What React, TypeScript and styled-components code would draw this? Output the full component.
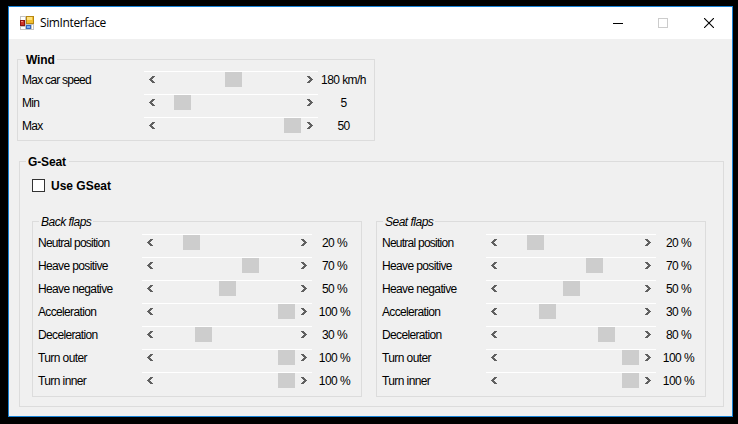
import React from "react";
import styled, { createGlobalStyle } from "styled-components";

const GlobalStyle = createGlobalStyle`
  * { box-sizing: border-box; }
  html, body { margin: 0; background: #000; }
  body { overflow: hidden; }
`;

const Desktop = styled.main`
  width: 738px;
  height: 424px;
  padding: 6px 5px 7px 8px;
  background: #000;
  color: #000;
  font: 12px/14px "Liberation Sans", Arial, sans-serif;
`;

const Window = styled.section`
  display: flex;
  flex-direction: column;
  width: 725px;
  height: 411px;
  border: 1px solid #1883d7;
  background: #f0f0f0;
`;

const TitleBar = styled.header`
  display: flex;
  align-items: center;
  flex: 0 0 32px;
  padding-left: 11px;
  background: #fff;
`;

const Title = styled.h1`
  flex: 1;
  margin: 0 0 0 6px;
  font: 400 12px/16px "Open Sans", "Noto Sans", sans-serif;
  letter-spacing: -0.38px;
`;

const Caption = styled.div`
  display: grid;
  grid-template-columns: 45px 46px 11px;
  align-items: center;
  padding-right: 17px;
`;

const Client = styled.div`
  display: flex;
  flex-direction: column;
  align-items: flex-start;
  gap: 20px;
  padding: 20px 0 0 8px;
`;

const Group = styled.section<{ $w: number; $h: number; $indent?: number }>`
  width: ${(p) => p.$w}px;
  height: ${(p) => p.$h}px;
  margin-left: ${(p) => p.$indent ?? 0}px;
  border: 1px solid #dcdcdc;
`;

const Legend = styled.h2<{ $w: number; $italic?: boolean; $spacing: number }>`
  width: ${(p) => p.$w}px;
  height: 14px;
  margin: -7px 0 0 6px;
  padding-left: 2px;
  background: #f0f0f0;
  font-size: 12px;
  line-height: 14px;
  font-weight: ${(p) => (p.$italic ? 400 : 700)};
  font-style: ${(p) => (p.$italic ? "italic" : "normal")};
  letter-spacing: ${(p) => p.$spacing}px;
  white-space: nowrap;
`;

const Rows = styled.div<{ $top: number; $left: number }>`
  padding: ${(p) => p.$top}px 0 0 ${(p) => p.$left}px;
`;

const Row = styled.div`
  display: flex;
  height: 23px;
`;

const Label = styled.span<{ $w: number; $spacing: number }>`
  flex: 0 0 ${(p) => p.$w}px;
  padding-top: 2px;
  letter-spacing: ${(p) => p.$spacing}px;
  white-space: nowrap;
`;

const ScrollBar = styled.div<{ $w: number }>`
  display: flex;
  flex: 0 0 ${(p) => p.$w}px;
  height: 17px;
  padding: 0 5px;
  border-top: 1px solid #fff;
`;

const Track = styled.div`
  flex: 1;
`;

const Thumb = styled.div<{ $offset: number }>`
  width: 17px;
  height: 15px;
  margin-left: ${(p) => p.$offset}px;
  background: #cdcdcd;
`;

const Value = styled.span<{ $w: number }>`
  flex: 0 0 ${(p) => p.$w}px;
  padding-top: 2px;
  letter-spacing: -0.55px;
  text-align: center;
  white-space: nowrap;
`;

const ArrowSvg = styled.svg<{ $flip?: boolean }>`
  flex: none;
  margin-top: 4px;
  transform: ${(p) => (p.$flip ? "scaleX(-1)" : "none")};
`;

const CheckLine = styled.label`
  display: flex;
  align-items: flex-start;
  gap: 6px;
  margin: 10px 0 0 12px;
  height: 14px;
  font-weight: 700;
`;

const CheckBox = styled.span`
  width: 13px;
  height: 13px;
  border: 1px solid #333;
  background: #fff;
`;

const FlapGroups = styled.div`
  display: flex;
  gap: 14px;
  margin: 28px 0 0 12px;
`;

const Arrow = ({ flip }: { flip?: boolean }) => (
  <ArrowSvg $flip={flip} width="6" height="7" viewBox="0 0 6 7" shapeRendering="crispEdges">
    <path
      d="M3 0h3v1h-1v1h-1v1h-1v1h1v1h1v1h1v1h-3v-1h-1v-1h-1v-1h-1v-1h1v-1h1v-1h1z"
      fill="#606060"
    />
  </ArrowSvg>
);

const AppIcon = () => (
  <svg width="14" height="14" viewBox="0 0 14 14" shapeRendering="crispEdges">
    <path d="M0 0h14v14H0z" fill="#c3c3c3" />
    <path d="M1 1h4v3H1zM1 11h4v2H1zM12 9h1v4h-1z" fill="#fff" />
    <path d="M0 4h5v6H0z" fill="#8e1512" />
    <path d="M1 5h3v4H1z" fill="#cf3529" />
    <path d="M1 5h2v1H1z" fill="#ef8c78" />
    <path d="M6 0h8v8H6z" fill="#b68612" />
    <path d="M7 1h6v6H7z" fill="#f3bf2e" />
    <path d="M7 1h5v3H7z" fill="#ffe27c" />
    <path d="M6 9h5v4H6z" fill="#3567bd" />
    <path d="M7 10h3v2H7z" fill="#79adf4" />
  </svg>
);

type Setting = {
  label: string;
  value: string;
  offset: number;
  spacing: number;
};

type SettingRowProps = Setting & { labelWidth: number; barWidth: number; valueWidth: number };

const SettingRow = (p: SettingRowProps) => (
  <Row>
    <Label $w={p.labelWidth} $spacing={p.spacing}>{p.label}</Label>
    <ScrollBar $w={p.barWidth}>
      <Arrow />
      <Track><Thumb $offset={p.offset} /></Track>
      <Arrow flip />
    </ScrollBar>
    <Value $w={p.valueWidth}>{p.value}</Value>
  </Row>
);

const wind: Setting[] = [
  { label: "Max car speed", value: "180 km/h", offset: 70, spacing: -0.75 },
  { label: "Min", value: "5", offset: 19, spacing: -0.7 },
  { label: "Max", value: "50", offset: 129, spacing: -0.7 },
];

const flapNames: [string, number][] = [
  ["Neutral position", -0.75],
  ["Heave positive", -0.63],
  ["Heave negative", -0.63],
  ["Acceleration", -0.65],
  ["Deceleration", -0.65],
  ["Turn outer", -0.6],
  ["Turn inner", -0.6],
];

const offsets: Record<number, number> = { 20: 30, 30: 42, 50: 66, 70: 89, 80: 101, 100: 125 };

const flaps = [
  { name: "Back flaps", legend: 54, values: [20, 70, 50, 100, 30, 100, 100] },
  { name: "Seat flaps", legend: 52, values: [20, 70, 50, 30, 80, 100, 100] },
];

export default function App() {
  return (
    <>
      <GlobalStyle />
      <Desktop>
        <Window>
          <TitleBar>
            <AppIcon />
            <Title>SimInterface</Title>
            <Caption>
              <svg width="10" height="10" shapeRendering="crispEdges">
                <path d="M0 5h10v1H0z" fill="#000" />
              </svg>
              <svg width="10" height="10" shapeRendering="crispEdges">
                <path d="M.5.5h9v9h-9z" fill="none" stroke="#ccc" />
              </svg>
              <svg width="10" height="10">
                <path d="M0 0l10 10M10 0l-10 10" stroke="#000" strokeWidth="1.1" />
              </svg>
            </Caption>
          </TitleBar>
          <Client>
            <Group $w={358} $h={82}>
              <Legend $w={33} $spacing={-0.15}>Wind</Legend>
              <Rows $top={4} $left={4}>
                {wind.map((s) => (
                  <SettingRow key={s.label} {...s} labelWidth={122} barWidth={174} valueWidth={51} />
                ))}
              </Rows>
            </Group>
            <Group $w={705} $h={246} $indent={2}>
              <Legend $w={43} $spacing={-0.15}>G-Seat</Legend>
              <CheckLine>
                <CheckBox role="checkbox" aria-checked="false" />
                Use GSeat
              </CheckLine>
              <FlapGroups>
                {flaps.map((group) => (
                  <Group key={group.name} $w={330} $h={176}>
                    <Legend $w={group.legend} $italic $spacing={-0.5}>{group.name}</Legend>
                    <Rows $top={5} $left={5}>
                      {group.values.map((v, i) => (
                        <SettingRow
                          key={flapNames[i][0]}
                          label={flapNames[i][0]}
                          spacing={flapNames[i][1]}
                          value={`${v} %`}
                          offset={offsets[v]}
                          labelWidth={104}
                          barWidth={170}
                          valueWidth={45}
                        />
                      ))}
                    </Rows>
                  </Group>
                ))}
              </FlapGroups>
            </Group>
          </Client>
        </Window>
      </Desktop>
    </>
  );
}
